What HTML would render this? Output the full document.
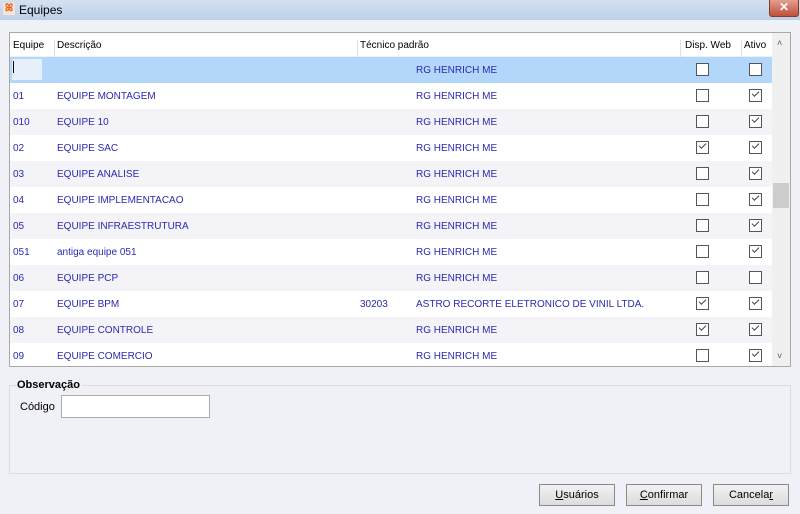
<!DOCTYPE html>
<html><head><style>
body{margin:0;width:800px;height:514px;background:#f0f0f7;font-family:"Liberation Sans",sans-serif;font-size:11px;position:relative;overflow:hidden}
.title{position:absolute;left:0;top:0;width:800px;height:20px;background:linear-gradient(#d4e1f1,#bdd0e8);}
.title span{position:absolute;left:19px;top:3px;font-size:12px;color:#000}
.ico{position:absolute;left:3px;top:3px;width:12px;height:12px;background:#f7e4d6;color:#e8601c;font-size:10px;line-height:12px;text-align:center;font-weight:bold}
.close{position:absolute;left:769px;top:0;width:28px;height:16px;background:linear-gradient(#e0a090,#c0503a);border:1px solid #8a3a2a;border-top:none;border-radius:0 0 3px 3px;color:#fff;font-weight:bold;text-align:center;line-height:15px;font-size:12px}
.grid{position:absolute;left:9px;top:32px;width:780px;height:333px;border:1px solid #a8a8a8;background:#f0f0f7;overflow:hidden;font-size:10px}
.hdr{position:absolute;left:0;top:0;height:23px;width:762px;background:#fff}
.hdr div{position:absolute;top:7px;color:#000}
.sep{position:absolute;top:0;width:1px;height:23px;background:#e0e0e0}
.row{position:absolute;left:0;width:762px;height:26px;color:#2a2ab0}
.row div{position:absolute;top:8px}
.cb{position:absolute;width:11px;height:11px;border:1px solid #555;background:#fff;top:6px!important}
.cb.c::after{content:"";position:absolute;left:2px;top:1px;width:6px;height:3px;border-left:1px solid #444;border-bottom:1px solid #444;transform:rotate(-45deg)}
.sb{position:absolute;left:762px;top:0;width:18px;height:333px;background:#f0f0f0}
.thumb{position:absolute;left:1px;top:150px;width:16px;height:25px;background:#cdcdcd}
.grp{position:absolute;left:9px;top:385px;width:780px;height:87px;border:1px solid #dcdcdc}
.lbl{position:absolute;font-weight:bold;left:17px;top:379px;font-size:11px;background:#f0f0f7;padding-right:2px}
.btn{position:absolute;top:484px;width:74px;height:20px;border:1px solid #8a8a8a;background:linear-gradient(#f2f2f2,#dcdcdc);text-align:center;line-height:20px;font-size:11px}
</style></head><body>
<div class="title"><div class="ico">ꕤ</div><span>Equipes</span><div class="close">✕</div></div>
<div class="grid">
<div class="hdr">
<div style="left:3px">Equipe</div><div class="sep" style="left:44px"></div>
<div style="left:47px">Descrição</div><div class="sep" style="left:347px"></div>
<div style="left:350px">Técnico padrão</div><div class="sep" style="left:670px"></div>
<div style="left:675px">Disp. Web</div><div class="sep" style="left:731px"></div>
<div style="left:734px">Ativo</div>
</div>
<div id="rows"></div>
<div class="sb"><div style="position:absolute;left:5px;top:5px;font-size:9px;color:#555">˄</div><div class="thumb"></div><div style="position:absolute;left:5px;top:318px;font-size:9px;color:#555">˅</div></div>
</div>
<div class="grp"></div>
<div class="lbl">Observação</div>
<div style="position:absolute;left:20px;top:401px">Código</div>
<div style="position:absolute;left:61px;top:395px;width:147px;height:21px;background:#fff;border:1px solid #acacac"></div>
<div class="btn" style="left:539px"><u>U</u>suários</div>
<div class="btn" style="left:626px"><u>C</u>onfirmar</div>
<div class="btn" style="left:713px">Cancela<u>r</u></div>
<script>
var d=[["","","",0,0,1],["01","EQUIPE MONTAGEM","",0,1],["010","EQUIPE 10","",0,1],["02","EQUIPE SAC","",1,1],["03","EQUIPE ANALISE","",0,1],["04","EQUIPE IMPLEMENTACAO","",0,1],["05","EQUIPE INFRAESTRUTURA","",0,1],["051","antiga equipe 051","",0,1],["06","EQUIPE PCP","",0,0],["07","EQUIPE BPM","30203",1,1],["08","EQUIPE CONTROLE","",1,1],["09","EQUIPE COMERCIO","",0,1]];
var h="";d.forEach(function(r,i){var bg=r[5]?"#b3d7fa":(i%2==0?"#f3f3f8":"#fff");
var nm=r[2]?"ASTRO RECORTE ELETRONICO DE VINIL LTDA.":"RG HENRICH ME";
h+='<div class="row" style="top:'+(24+i*26)+'px;background:'+bg+'">'+(r[5]?'<div style="left:2px;top:2px;width:30px;height:21px;background:#e6f0fb"></div><div style="left:3px;top:4px;width:1px;height:12px;background:#000"></div>':'')+'<div style="left:3px">'+r[0]+'</div><div style="left:47px">'+r[1]+'</div><div style="left:350px">'+r[2]+'</div><div style="left:406px">'+nm+'</div><div class="cb'+(r[3]?' c':'')+'" style="left:686px"></div><div class="cb'+(r[4]?' c':'')+'" style="left:739px"></div></div>';});
document.getElementById("rows").innerHTML=h;
</script>
</body></html>
